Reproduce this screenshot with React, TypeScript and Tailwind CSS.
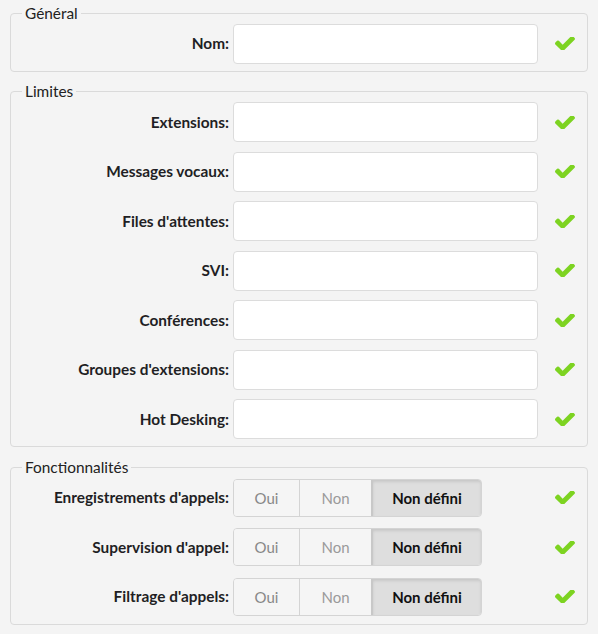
import React from "react";

const FONT = { fontFamily: "Lato, 'Noto Sans', sans-serif" };

function Check() {
  return (
    <svg viewBox="121 430 1550 996" className="w-[20px] h-[13px]" aria-hidden>
      <path
        fill="#7dd321"
        d="M1671 566q0 40-28 68l-724 724-136 136q-28 28-68 28t-68-28l-136-136-362-362q-28-28-28-68t28-68l136-136q28-28 68-28t68 28l294 295 656-657q28-28 68-28t68 28l136 136q28 28 28 68z"
      />
    </svg>
  );
}

function Row({ label, children }: { label: string; children: React.ReactNode }) {
  return (
    <div className="flex items-center h-[49.5px]">
      <label className="w-[222px] pr-[4px] text-right font-bold text-[15.4px] text-[#1f1f24]">{label}</label>
      <div className="w-[305px] flex">{children}</div>
      <div className="ml-[17px] flex items-center">
        <Check />
      </div>
    </div>
  );
}

function TextInput() {
  return <input type="text" className="w-full h-[40px] bg-white border border-[#dcdcdc] rounded-[4px] outline-none px-2" />;
}

function Toggle() {
  return (
    <div className="flex h-[38px] border border-[#d4d4d4] rounded-[4px] overflow-hidden text-[15px]">
      <button className="w-[66px] bg-[#f5f5f5] text-[#888] border-r border-[#d4d4d4]">Oui</button>
      <button className="w-[71px] bg-[#f5f5f5] text-[#9a9a9a]">Non</button>
      <button className="w-[110px] bg-[#dedede] text-[#111] font-bold border-l-2 border-[#c8c8c8] shadow-[inset_0_2px_3px_rgba(0,0,0,0.1)]">
        Non défini
      </button>
    </div>
  );
}

function Group({ title, children }: { title: string; children: React.ReactNode }) {
  return (
    <fieldset className="border border-[#dadada] rounded-[4px] px-[11px] pb-[2px] pt-0">
      <legend className="px-[3px] text-[15.4px] leading-[11px] text-[#222]">{title}</legend>
      <div className="-ml-[11px] pt-[0.5px]">{children}</div>
    </fieldset>
  );
}

export default function App() {
  return (
    <div className="min-h-screen bg-[#f4f4f4] px-[10px] pt-[7.5px] flex flex-col gap-[14.5px]" style={FONT}>
      <Group title="Général">
        <Row label="Nom:">
          <TextInput />
        </Row>
      </Group>
      <Group title="Limites">
        {["Extensions:", "Messages vocaux:", "Files d'attentes:", "SVI:", "Conférences:", "Groupes d'extensions:", "Hot Desking:"].map(
          (l) => (
            <Row key={l} label={l}>
              <TextInput />
            </Row>
          )
        )}
      </Group>
      <Group title="Fonctionnalités">
        {["Enregistrements d'appels:", "Supervision d'appel:", "Filtrage d'appels:"].map((l) => (
          <Row key={l} label={l}>
            <Toggle />
          </Row>
        ))}
      </Group>
    </div>
  );
}
